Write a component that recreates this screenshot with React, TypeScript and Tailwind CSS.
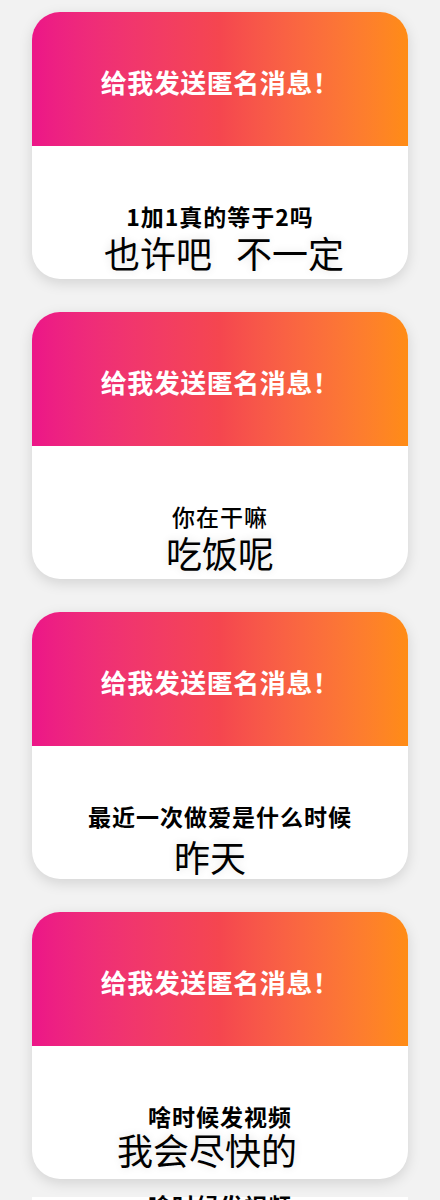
const cards = [
  { q: "1加1真的等于2吗", a: "也许吧   不一定", qw: "font-bold", am: "mt-[5px]", ax: "translate-x-[4px]" },
  { q: "你在干嘛", a: "吃饭呢", qw: "font-medium", am: "mt-[5px]", ax: "" },
  { q: "最近一次做爱是什么时候", a: "昨天", qw: "font-semibold", am: "mt-[9px]", ax: "-translate-x-[10px]" },
  { q: "啥时候发视频", a: "我会尽快的", qw: "font-semibold", am: "mt-[2px]", ax: "-translate-x-[13px]" },
];

export default function App() {
  return (
    <div className="h-[1200px] overflow-hidden bg-[#f2f2f2] font-['Noto_Sans_CJK_SC',sans-serif]">
      <div className="flex flex-col gap-[33px] px-[32px] pt-[12px]">
        {cards.map((c, i) => (
          <div
            key={i}
            className="h-[267px] rounded-[28px] overflow-hidden bg-white shadow-[0_4px_14px_rgba(0,0,0,0.13)] flex flex-col"
          >
            {/* header */}
            <div className="h-[134px] shrink-0 bg-gradient-to-r from-[#ec1588] via-[#f5464f] to-[#ff8c14] flex items-center justify-center pt-[6px]">
              <span className="text-white text-[26px] leading-[32px] font-bold tracking-[0.5px]">
                给我发送匿名消息！
              </span>
            </div>
            {/* body */}
            <div className="flex-1 flex flex-col items-center pt-[57px]">
              <p className={`text-black text-[23px] leading-[26px] tracking-[1px] ${c.qw}`}>{c.q}</p>
              <p
                className={`text-black text-[36px] leading-[36px] whitespace-pre [text-shadow:0_0_8px_rgba(0,0,0,0.12)] ${c.am} ${c.ax}`}
              >
                {c.a}
              </p>
            </div>
          </div>
        ))}
      </div>
      {/* clipped strip at the bottom */}
      <div className="mx-[32px] mt-[18px] h-[20px] bg-white flex justify-center">
        <p className="text-black text-[23px] leading-[26px] tracking-[1px] font-semibold -mt-[5px]">啥时候发视频</p>
      </div>
    </div>
  );
}
